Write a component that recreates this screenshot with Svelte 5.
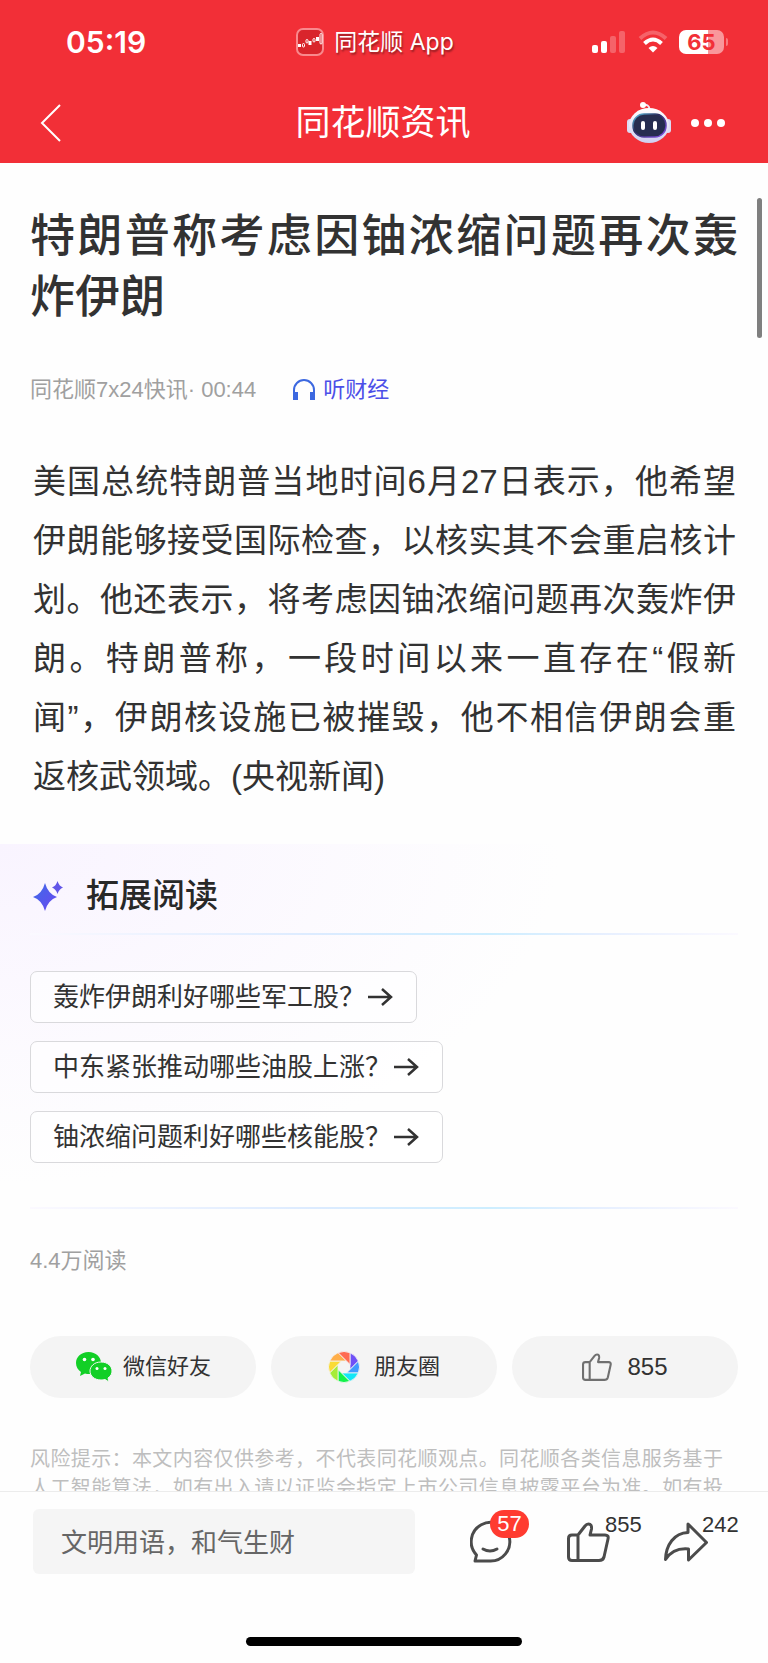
<script>
  let comment = "";

  const questions = [
    "轰炸伊朗利好哪些军工股？",
    "中东紧张推动哪些油股上涨？",
    "铀浓缩问题利好哪些核能股？",
  ];

  // camera blades, clockwise from the top right
  const blades = [
    "#6f50f6", "#3f9bff", "#12e6f6", "#12f24a",
    "#a6ec38", "#fadb35", "#ffae49", "#ff6b52",
  ];

  const thumb =
    "M11 13H5Q1.5 13 1.5 16.5V35Q1.5 38.5 5 38.5H32Q36 38.5 37 35L41 17Q42 13 38 13H23L24.5 7Q25 2 21.5 2Q19.5 2 18 4L11 13V38.5";
</script>

<div class="page">
  <header>
    <div class="status">
      <span class="time">05:19</span>
      <div class="app">
        <svg width="28" height="28" viewBox="0 0 28 28">
          <rect x="1" y="1" width="26" height="26" rx="6" fill="#d9252c" stroke="#f9898d" stroke-width="2" />
          <g fill="#fff">
            <rect x="2" y="16" width="3" height="3" />
            <rect x="12.500" y="13" width="3" height="4" />
            <rect x="20" y="9" width="3" height="4" />
          </g>
          <g fill="none" stroke="#fff">
            <rect x="6.500" y="15.500" width="2" height="3.500" rx="1" />
            <rect x="10" y="11.500" width="2" height="3.500" rx="1" />
            <rect x="17" y="10.500" width="2" height="3.500" rx="1" />
            <rect x="24" y="5.500" width="2" height="10.500" rx="1" />
          </g>
        </svg>
        <span>同花顺 App</span>
      </div>
      <div class="signals">
        <svg width="36" height="24" viewBox="0 0 36 24" fill="#fff">
          <rect x="1" y="15" width="6" height="8" rx="2" />
          <rect x="10" y="11" width="6" height="12" rx="2" />
          <rect x="19" y="6" width="6" height="17" rx="2" opacity=".25" />
          <rect x="28" y="1" width="6" height="22" rx="2" opacity=".25" />
        </svg>
        <svg width="30" height="24" viewBox="0 0 30 24" fill="none" stroke="#fff" stroke-width="4">
          <path d="M2 8.500Q15 -3.500 28 8.500" opacity=".25" />
          <path d="M6.500 13.500Q15 5.500 23.500 13.500" />
          <path d="M15 22.500L10.500 18Q15 14 19.500 18Z" fill="#fff" stroke="none" />
        </svg>
        <div class="battery"><span>65</span></div>
      </div>
    </div>
    <div class="nav">
      <button class="back" aria-label="返回">
        <svg width="22" height="38" viewBox="0 0 22 38" fill="none" stroke="#fff" stroke-width="2">
          <path d="M20 1L2 19L20 37" />
        </svg>
      </button>
      <span class="nav-title">同花顺资讯</span>
      <div class="tools">
        <button aria-label="助手">
          <svg width="46" height="44" viewBox="0 0 46 44">
            <defs>
              <linearGradient id="head" x1="0" y1="0" x2="0" y2="1">
                <stop offset="0" stop-color="#fff" />
                <stop offset="1" stop-color="#cfcff0" />
              </linearGradient>
              <linearGradient id="rim" x1="0" y1="0" x2="1" y2="1">
                <stop offset="0" stop-color="#5ec8e8" />
                <stop offset=".4" stop-color="#2b2c60" />
                <stop offset="1" stop-color="#8a55f0" />
              </linearGradient>
            </defs>
            <path d="M17 4Q23 3 23.500 8" fill="none" stroke="#f4e8f4" stroke-width="2" />
            <circle cx="17" cy="4" r="3" fill="#fff" />
            <rect x="1" y="18" width="6" height="14" rx="3" fill="#dcdcf4" />
            <rect x="39" y="18" width="6" height="14" rx="3" fill="#dcdcf4" />
            <ellipse cx="23" cy="24.500" rx="20" ry="17.500" fill="url(#head)" />
            <rect x="7" y="13" width="33" height="23" rx="11" fill="#262d50" stroke="url(#rim)" stroke-width="1.500" />
            <rect x="15" y="20" width="4" height="9" rx="2" fill="#fff" />
            <rect x="27" y="20" width="4" height="9" rx="2" fill="#fff" />
          </svg>
        </button>
        <button aria-label="更多">
          <svg width="36" height="10" viewBox="0 0 36 10" fill="#fff">
            <circle cx="5" cy="5" r="4" />
            <circle cx="18" cy="5" r="4" />
            <circle cx="31" cy="5" r="4" />
          </svg>
        </button>
      </div>
    </div>
  </header>

  <main>
    <div class="scrollbar"></div>
    <article>
      <h1>特朗普称考虑因铀浓缩问题再次轰炸伊朗</h1>
      <div class="meta">
        <span>同花顺7x24快讯· 00:44</span>
        <a href="#listen">
          <svg width="24" height="24" viewBox="0 0 24 24" fill="none" stroke="#3c68e0" stroke-width="2">
            <path d="M2 20V12A10 10 0 0 1 22 12V20" />
            <path d="M3.500 14V22M20.500 14V22" stroke-width="5" />
          </svg>
          听财经
        </a>
      </div>
      <p class="content">美国总统特朗普当地时间6月27日表示，他希望伊朗能够接受国际检查，以核实其不会重启核计划。他还表示，将考虑因铀浓缩问题再次轰炸伊朗。特朗普称，一段时间以来一直存在“假新闻”，伊朗核设施已被摧毁，他不相信伊朗会重返核武领域。(央视新闻)</p>
    </article>

    <section class="extend">
      <h2>
        <svg width="32" height="32" viewBox="0 0 32 32">
          <defs>
            <linearGradient id="star" x1="0" y1="0" x2="1" y2="1">
              <stop offset="0" stop-color="#3d6be8" />
              <stop offset="1" stop-color="#6a48f0" />
            </linearGradient>
          </defs>
          <path d="M13 3Q16 14 25 17Q16 20 13 31Q10 20 1 17Q10 14 13 3Z" fill="url(#star)" />
          <path d="M25.500 1Q27 6 31 7.500Q27 9 25.500 14Q24 9 20 7.500Q24 6 25.500 1Z" fill="#6256e8" />
        </svg>
        拓展阅读
      </h2>
      <div class="line"></div>
      <div class="questions">
        {#each questions as question}
          <button class="question">
            {question}
            <svg width="28" height="26" viewBox="0 0 28 26" fill="none" stroke="#323232" stroke-width="2.500">
              <path d="M3 13H26M17 5L26 13L17 21" />
            </svg>
          </button>
        {/each}
      </div>
      <div class="line"></div>
    </section>

    <section class="bottom">
      <p class="reads">4.4万阅读</p>
      <div class="share">
        <button>
          <svg width="38" height="32" viewBox="0 0 38 32" fill="#12cf26">
            <path d="M13.500 1C6 1 1 6 1 12C1 16 3 19 6 21L5 25L10 22.500Q12 23 14 23C21 23 26 18 26 12C26 6 21 1 13.500 1Z" />
            <path d="M26 11C19 11 15 15.500 15 20C15 25 19.500 29 26 29Q28 29 30 28.500L34 31L33 27C36 25 37 22.500 37 20C37 15.500 33 11 26 11Z" stroke="#f4f4f4" />
            <g fill="#fff">
              <circle cx="9.500" cy="8.500" r="1.800" />
              <circle cx="18" cy="8.500" r="1.800" />
              <circle cx="22" cy="17.500" r="1.500" />
              <circle cx="30" cy="17.500" r="1.500" />
            </g>
          </svg>
          微信好友
        </button>
        <button class="moments">
          <svg width="32" height="32" viewBox="-16 -16 32 32">
            {#each blades as color, i}
              <path
                d="M6 -14.300A15.500 15.500 0 0 1 14.350 -5.870L6 2.500Z"
                fill={color}
                stroke="#f4f4f4"
                stroke-width=".8"
                transform="rotate({i * 45})"
              />
            {/each}
          </svg>
          朋友圈
        </button>
        <button class="likes">
          <svg width="30" height="28" viewBox="0 0 43 40" fill="none" stroke="#707070" stroke-width="3" stroke-linejoin="round">
            <path d={thumb} />
          </svg>
          855
        </button>
      </div>
      <p class="risk">风险提示：本文内容仅供参考，不代表同花顺观点。同花顺各类信息服务基于人工智能算法，如有出入请以证监会指定上市公司信息披露平台为准。如有投</p>
    </section>
  </main>

  <footer>
    <div class="bar">
      <input type="text" aria-label="评论" placeholder="文明用语，和气生财" bind:value={comment} />
      <div class="actions">
        <button aria-label="评论 57">
          <svg width="44" height="44" viewBox="2 0 44 44">
            <path d="M7 41L8.500 35A19.300 19.300 0 1 1 22 41Z" />
            <path d="M15 29Q22 33 29 29" />
          </svg>
          <span class="badge">57</span>
        </button>
        <button aria-label="点赞 855">
          <svg width="44" height="44" viewBox="0 -2 44 44">
            <path d={thumb} />
          </svg>
          <span class="count">855</span>
        </button>
        <button aria-label="分享 242">
          <svg width="44" height="44" viewBox="1 -1 44 44">
            <path d="M2.500 38.500C3 24 11 12 25 11.500V3L43.500 21.500L25.500 39V28C15 27 8 30 2.500 38.500Z" />
          </svg>
          <span class="count">242</span>
        </button>
      </div>
    </div>
    <div class="home"></div>
  </footer>
</div>

<style>
:global(body) {
  margin: 0;
  background: #fff;
}

.page {
  height: 100vh;
  display: flex;
  flex-direction: column;
  background: #fefefe;
  color: #323232;
  font-family: "Liberation Sans", "Noto Sans CJK SC", sans-serif;
}

h1, h2, p {
  margin: 0;
}

button {
  border: 0;
  padding: 0;
  background: none;
  color: inherit;
  font: inherit;
  cursor: pointer;
}

svg {
  display: block;
  flex-shrink: 0;
}

header {
  background: #f22f37;
  color: #fff;
}

.status, .nav {
  display: grid;
  grid-template-columns: 1fr auto 1fr;
  align-items: center;
}

.status {
  height: 84px;
  padding: 0 44px 0 26px;
}

.time {
  padding-left: 40px;
  font: 600 30px Inter, sans-serif;
}

.app {
  display: flex;
  align-items: center;
  gap: 10px;
  font-family: Inter, "Noto Sans CJK SC", sans-serif;
  font-size: 23px;
  line-height: 30px;
  text-shadow: 1px 2px 2px rgba(0, 0, 0, 0.4);
}

.signals {
  display: flex;
  justify-content: flex-end;
  align-items: center;
  gap: 11px;
}

.battery {
  position: relative;
  width: 45px;
  height: 24px;
  border-radius: 7px;
  background: linear-gradient(to right, #fff 65%, #f9979b 65%);
  color: #f22f37;
  font: 700 22px/24px Inter, sans-serif;
  text-align: center;
}

.battery::after {
  content: "";
  position: absolute;
  right: -4px;
  top: 8px;
  width: 2px;
  height: 8px;
  border-radius: 0 2px 2px 0;
  background: #f9797e;
}

.nav {
  box-sizing: border-box;
  height: 79px;
  padding: 0 42px 2px 40px;
}

.back {
  justify-self: start;
}

.nav-title {
  font-size: 35px;
  line-height: 48px;
}

.tools {
  display: flex;
  justify-content: flex-end;
  align-items: center;
  gap: 18px;
}

main {
  position: relative;
  flex: 1;
  min-height: 0;
  overflow: hidden;
}

.scrollbar {
  position: absolute;
  top: 35px;
  right: 6px;
  width: 5px;
  height: 140px;
  border-radius: 3px;
  background: #7f7f7f;
}

article {
  padding: 43px 30px 38px;
}

h1 {
  font-size: 45px;
  line-height: 61px;
  font-weight: 500;
  text-align: justify;
}

.meta {
  display: flex;
  align-items: center;
  gap: 36px;
  margin: 46px 0;
  color: #a0a0a0;
  font-size: 22px;
  line-height: 32px;
}

.meta a {
  display: flex;
  align-items: center;
  gap: 7px;
  color: #4c4fe8;
  text-decoration: none;
}

.content {
  padding: 0 2px 0 3px;
  font-size: 33px;
  line-height: 59px;
  text-align: justify;
}

.extend {
  padding: 0 30px;
  background: radial-gradient(ellipse 560px 340px at 0 0, #f9f4ff, #fefefe);
}

h2 {
  display: flex;
  align-items: center;
  gap: 22px;
  padding: 28px 2px 14px;
  color: #282828;
  font-size: 33px;
  line-height: 47px;
  font-weight: 500;
}

.line {
  height: 2px;
  background: linear-gradient(to right, #fbf9ff, #dcebff 40%, #cdeeff 65%, #e6efff 80%, #fbf9ff);
}

.questions {
  display: flex;
  flex-direction: column;
  align-items: flex-start;
  gap: 18px;
  padding: 36px 0 44px;
}

.question {
  display: flex;
  align-items: center;
  padding: 5px 23px 5px 22px;
  border: 1px solid #d9d9dc;
  border-radius: 7px;
  background: rgba(255, 255, 255, 0.6);
  font-size: 26px;
  line-height: 40px;
}

.bottom {
  padding: 36px 30px 0;
}

.reads {
  color: #a0a0a0;
  font-size: 22px;
  line-height: 32px;
}

.share {
  display: flex;
  gap: 15px;
  margin: 59px 0 47px;
}

.share button {
  flex: 1;
  display: flex;
  justify-content: center;
  align-items: center;
  gap: 10px;
  height: 62px;
  border-radius: 31px;
  background: #f4f4f4;
  font-size: 22px;
  line-height: 30px;
}

.share .moments {
  gap: 14px;
}

.share .likes {
  gap: 15px;
  font-size: 24px;
}

.risk {
  padding-right: 15px;
  color: #bebebe;
  font-size: 20px;
  line-height: 29px;
  text-align: justify;
  text-align-last: justify;
}

footer {
  border-top: 1px solid #ececec;
  background: #fefefe;
}

.bar {
  display: flex;
  align-items: center;
  gap: 55px;
  padding: 17px 60px 63px 33px;
}

input {
  flex: 1;
  min-width: 0;
  height: 65px;
  box-sizing: border-box;
  padding: 4px 28px 0;
  border: 0;
  border-radius: 6px;
  background: #f5f5f5;
  color: #323232;
  font: inherit;
  font-size: 26px;
}

input::placeholder {
  color: #666;
  opacity: 1;
}

.actions {
  display: flex;
  gap: 53px;
}

.actions button {
  position: relative;
}

.actions svg {
  fill: none;
  stroke: #4b4b4b;
  stroke-width: 3;
  stroke-linejoin: round;
  stroke-linecap: round;
}

.badge, .count {
  position: absolute;
  left: 38px;
  top: -9px;
  font-size: 22px;
  line-height: 28px;
}

.badge {
  left: 20px;
  top: -10px;
  width: 39px;
  border-radius: 14px;
  background: #ff3b30;
  color: #fff;
  text-align: center;
}

.home {
  width: 36%;
  height: 9px;
  margin: 0 auto 17px;
  border-radius: 5px;
  background: #000;
}
</style>
